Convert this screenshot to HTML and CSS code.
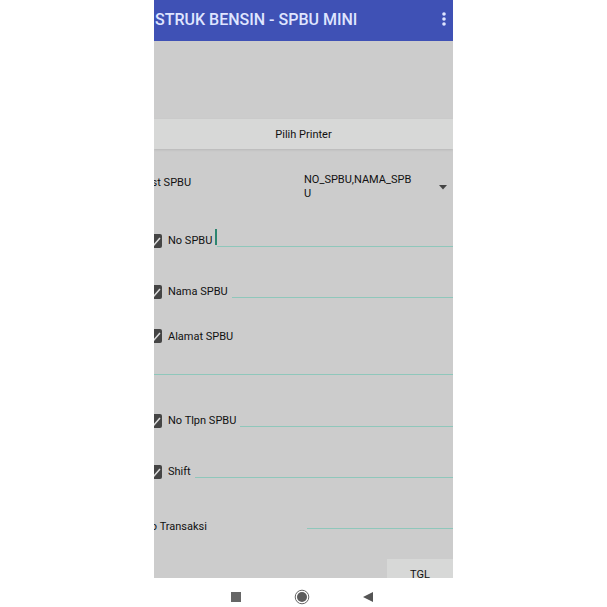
FILE: index.html
```html
<!DOCTYPE html>
<html lang="id">
<head>
    <meta charset="UTF-8">
    <meta name="viewport" content="width=device-width, initial-scale=1.0">
    <title>Struk Bensin - SPBU Mini</title>
    <link rel="stylesheet" href="styles.css">
</head>
<body>
<div class="phone">
    <header class="app-bar">
        <h1>STRUK BENSIN - SPBU MINI</h1>
        <button class="menu" type="button" aria-label="Menu">
            <svg width="6" height="16" viewBox="0 0 6 16"><g fill="#dfe5ff"><circle cx="3" cy="3" r="1.8"/><circle cx="3" cy="8" r="1.8"/><circle cx="3" cy="13" r="1.8"/></g></svg>
        </button>
    </header>

    <main class="content">
        <button class="printer" type="button">Pilih Printer</button>

        <form class="form">
            <div class="row list">
                <label for="list">List SPBU</label>
                <div class="dropdown">
                    <select id="list">
                        <option>NO_SPBU,NAMA_SPBU</option>
                    </select>
                    <svg width="8" height="5" viewBox="0 0 8 5"><path d="M0 0h8L4 4.5z" fill="#444"/></svg>
                </div>
            </div>
            <div class="row">
                <input type="checkbox" id="c-no" checked>
                <label for="c-no">No SPBU</label>
                <span class="caret"></span>
                <input type="text" class="focus" aria-label="No SPBU">
            </div>
            <div class="row">
                <input type="checkbox" id="c-nama" checked>
                <label for="c-nama">Nama SPBU</label>
                <input type="text" aria-label="Nama SPBU">
            </div>
            <div class="row short">
                <input type="checkbox" id="c-alamat" checked>
                <label for="c-alamat">Alamat SPBU</label>
            </div>
            <div class="row address">
                <input type="text" aria-label="Alamat SPBU">
            </div>
            <div class="row">
                <input type="checkbox" id="c-tlpn" checked>
                <label for="c-tlpn">No Tlpn SPBU</label>
                <input type="text" aria-label="No Tlpn SPBU">
            </div>
            <div class="row">
                <input type="checkbox" id="c-shift" checked>
                <label for="c-shift">Shift</label>
                <input type="text" aria-label="Shift">
            </div>
            <div class="row transaksi">
                <label for="transaksi">No Transaksi</label>
                <input type="text" id="transaksi">
            </div>
            <button class="tgl" type="button">TGL</button>
        </form>
    </main>

    <nav class="nav-bar">
        <button type="button" aria-label="Recent">
            <svg width="16" height="16" viewBox="0 0 16 16"><path d="M3 3h10v10H3z" fill="#666"/></svg>
        </button>
        <button type="button" aria-label="Home">
            <svg width="16" height="16" viewBox="0 0 16 16"><circle cx="8" cy="8" r="6.8" fill="none" stroke="#666"/><circle cx="8" cy="8" r="5" fill="#5c5c5c"/></svg>
        </button>
        <button type="button" aria-label="Back">
            <svg width="16" height="16" viewBox="0 0 16 16"><path d="M3 8l10-5v10z" fill="#555"/></svg>
        </button>
    </nav>
</div>
</body>
</html>
```
FILE: styles.css
```css
* {
    box-sizing: border-box;
}
body {
    margin: 0;
    background-color: #fff;
    font-family: Roboto, sans-serif;
    font-size: 11px;
    color: #111;
}
button, input, select {
    margin: 0;
    padding: 0;
    border: none;
    background: none;
    font: inherit;
    color: inherit;
}
.phone {
    display: flex;
    flex-direction: column;
    height: 100vh;
    margin: 0 154px;
}
.app-bar {
    display: flex;
    align-items: center;
    justify-content: space-between;
    height: 41px;
    padding: 0 6px 3px 1px;
    background-color: #3f51b5;
    color: #dfe5ff;
}
.app-bar h1 {
    margin: 0;
    font-size: 16px;
    font-weight: 500;
    white-space: nowrap;
}
.menu {
    display: flex;
}
.content {
    flex: 1;
    min-height: 0;
    padding-top: 78px;
    overflow: hidden;
    background-color: #ccc;
}
.printer {
    display: block;
    width: 100%;
    height: 30px;
    background-color: #d7d8d7;
    box-shadow: 0 1px 2px #b8b8b8;
}
/* the form is scrolled slightly to the left */
.form {
    display: flex;
    flex-direction: column;
    margin-left: -11px;
}
.row {
    display: flex;
    align-items: center;
    height: 51px;
    padding-left: 5px;
}
.row.list {
    height: 66px;
    padding-left: 0;
}
.row.short {
    height: 38px;
}
.row.address {
    height: 40px;
}
.row.transaksi {
    height: 58px;
    padding-left: 0;
}
.row label {
    white-space: nowrap;
}
input[type="checkbox"] {
    appearance: none;
    flex: none;
    width: 14px;
    height: 14px;
    margin-right: 6px;
    border-radius: 2px;
    background: #444 url("data:image/svg+xml,%3Csvg xmlns='http://www.w3.org/2000/svg' viewBox='0 0 14 14'%3E%3Cpath d='M2 7l4 4 6-7' fill='none' stroke='%23ddd' stroke-width='1.5'/%3E%3C/svg%3E");
}
input[type="text"] {
    flex: 1;
    align-self: flex-end;
    min-width: 0;
    height: 20px;
    margin: 0 0 19px 4px;
    border-bottom: 1px solid #8fc7bb;
    outline: none;
}
input[type="text"].focus {
    margin-left: 0;
}
.caret {
    width: 2px;
    height: 16px;
    margin: 0 0 8px 3px;
    background-color: #2c8570;
}
.row.address input {
    margin-bottom: 20px;
}
.list label, .transaksi label {
    flex: 0 0 160px;
}
.transaksi input[type="text"] {
    margin-bottom: 26px;
}
.dropdown {
    display: flex;
    align-items: center;
    justify-content: space-between;
    flex: 1;
    padding: 10px 6px 0 1px;
}
.dropdown select {
    appearance: none;
    width: 113px;
    line-height: 14px;
    white-space: normal;
    word-break: break-all;
}
.tgl {
    align-self: flex-end;
    width: 66px;
    height: 30px;
    margin-top: 4px;
    background-color: #d7d8d7;
}
.nav-bar {
    display: flex;
    justify-content: center;
    gap: 50px;
    height: 29px;
    padding: 8px 3px 0 0;
}
.nav-bar button {
    display: flex;
    align-items: center;
}
```
